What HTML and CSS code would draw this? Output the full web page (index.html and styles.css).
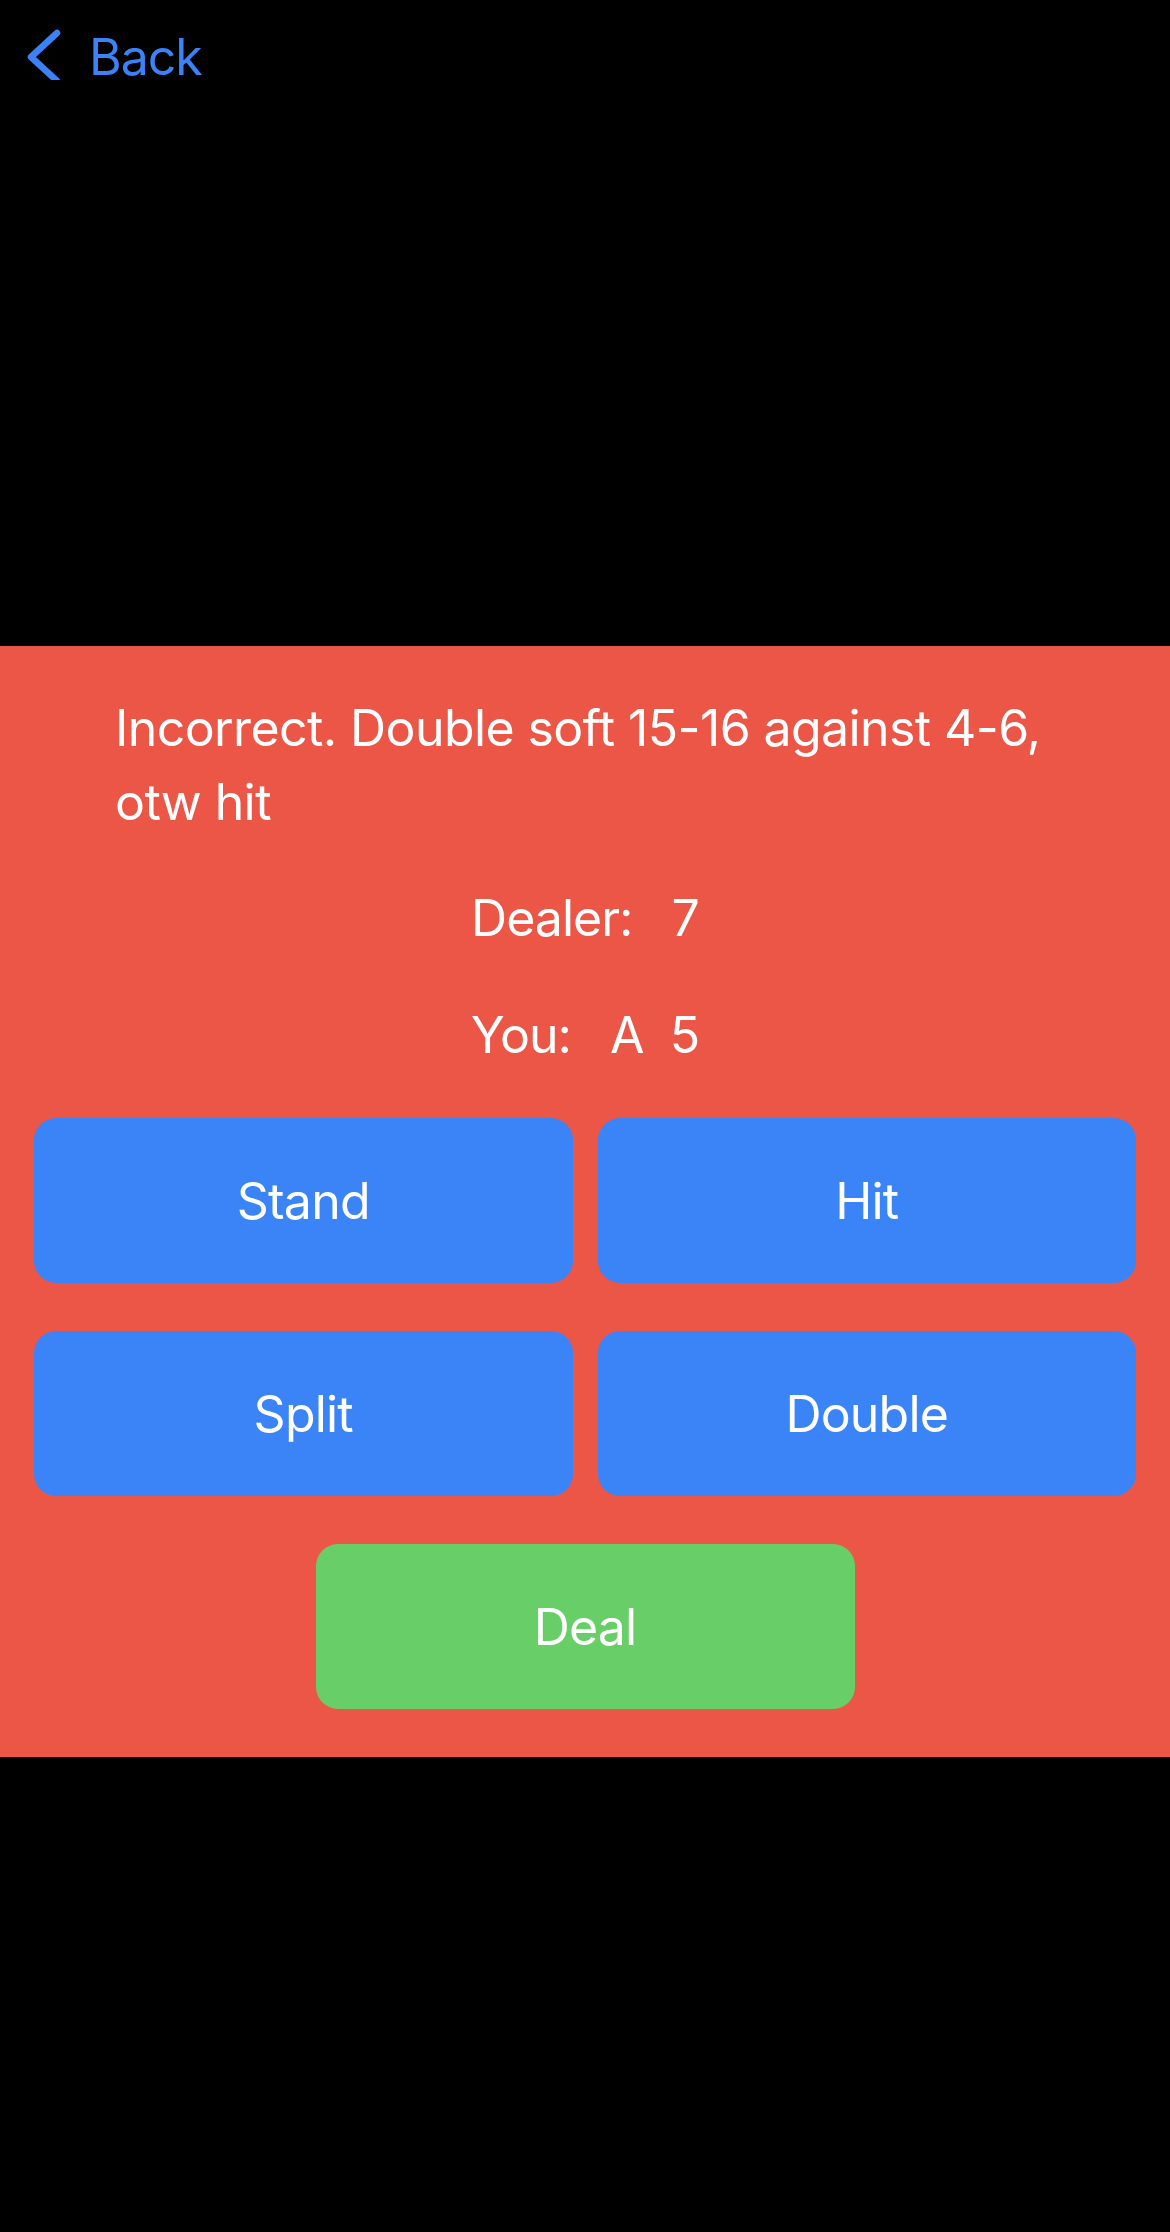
FILE: index.html
```html
<!DOCTYPE html>
<html lang="en">
<head>
<meta charset="utf-8">
<title>Blackjack Trainer</title>
<link rel="stylesheet" href="styles.css">
</head>
<body>
<div class="screen">
  <nav class="nav">
    <a class="back" href="#">
      <svg class="chev" width="40" height="60" viewBox="0 0 40 60" aria-hidden="true">
        <polyline points="36,13 10,37 36,61" fill="none" stroke="#3b82f6" stroke-width="6.5" stroke-linecap="round" stroke-linejoin="round"/>
      </svg>
      <span class="back-label">Back</span>
    </a>
  </nav>
  <section class="panel">
    <p class="message">Incorrect. Double soft 15-16 against <span class="nowrap">4-6,</span> otw hit</p>
    <p class="hand">Dealer:   7</p>
    <p class="hand">You:   A  5</p>
    <div class="actions">
      <button class="btn btn-blue">Stand</button>
      <button class="btn btn-blue">Hit</button>
      <button class="btn btn-blue">Split</button>
      <button class="btn btn-blue">Double</button>
    </div>
    <div class="deal-row">
      <button class="btn btn-green">Deal</button>
    </div>
  </section>
</div>
</body>
</html>
```

FILE: styles.css
```css
html, body {
  margin: 0;
  padding: 0;
  background: #000;
}
body {
  width: 1170px;
  height: 2232px;
  font-family: Inter, "Liberation Sans", sans-serif;
  letter-spacing: -0.6px;
  color: #fff;
  overflow: hidden;
}
.screen {
  display: flex;
  flex-direction: column;
}
.nav {
  height: 646px;
  box-sizing: border-box;
  padding: 20px 0 0 21px;
}
.back {
  display: flex;
  align-items: flex-start;
  text-decoration: none;
  color: #3b82f6;
}
.chev {
  display: block;
}
.back-label {
  font-size: 50px;
  line-height: 74px;
  margin-left: 28px;
  letter-spacing: -1px;
}
.panel {
  background: #eb5646;
  padding: 45px 34px 48px;
  display: flex;
  flex-direction: column;
}
.message {
  margin: 0 81px;
  font-size: 50px;
  line-height: 74px;
}
.nowrap {
  white-space: nowrap;
}
.hand {
  margin: 42px 0 0;
  font-size: 50px;
  line-height: 74px;
  text-align: center;
  white-space: pre;
  letter-spacing: -1px;
}
.hand + .hand {
  margin-top: 43px;
}
.actions {
  margin-top: 46px;
  display: grid;
  grid-template-columns: 1fr 1fr;
  column-gap: 25px;
  row-gap: 48px;
}
.btn {
  border: 0;
  border-radius: 22px;
  height: 165px;
  font-family: Inter, "Liberation Sans", sans-serif;
  font-size: 50px;
  letter-spacing: -0.8px;
  color: #fff;
  padding: 0;
}
.btn-blue {
  background: #3b84f7;
}
.deal-row {
  margin-top: 48px;
  display: flex;
  justify-content: center;
}
.btn-green {
  background: #68ce68;
  width: 539px;
}
```
